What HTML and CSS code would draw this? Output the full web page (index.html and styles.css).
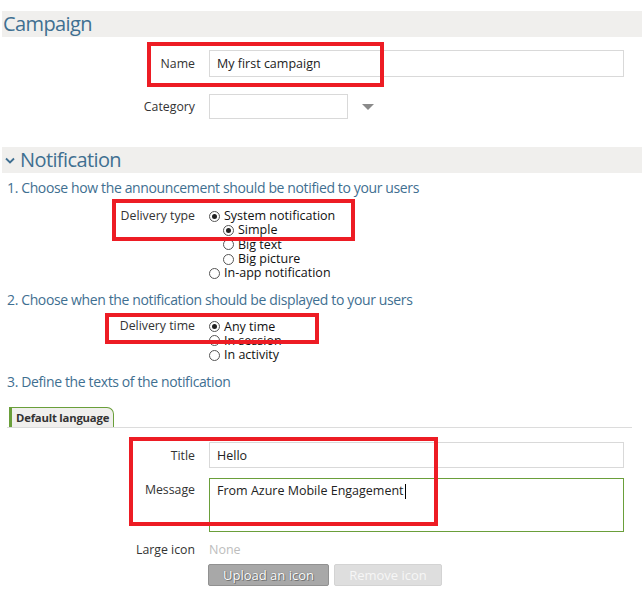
FILE: index.html
```html
<!DOCTYPE html>
<html>
<head>
<meta charset="utf-8">
<link rel="stylesheet" href="styles.css">
</head>
<body>
<div class="page">
  <section class="campaign">
    <h2 class="band">Campaign</h2>
    <div class="row row-name">
      <span class="lbl">Name</span>
      <div class="input wide">My first campaign</div>
    </div>
    <div class="row row-cat">
      <span class="lbl">Category</span>
      <div class="input select"></div>
      <span class="arrow"></span>
    </div>
  </section>

  <section class="notification">
    <h2 class="band band-notif"><span class="chev"><svg width="10" height="8" viewBox="0 0 10 8"><path d="M1 1.5 L5 5.5 L9 1.5" fill="none" stroke="#3f6f91" stroke-width="1.8"/></svg></span>Notification</h2>

    <p class="step step1">1. Choose how the announcement should be notified to your users</p>
    <div class="row row-radio type">
      <span class="lbl">Delivery type</span>
      <div class="radios">
        <div class="opt"><span class="radio on"></span>System notification</div>
        <div class="opt sub"><span class="radio on"></span>Simple</div>
        <div class="opt sub"><span class="radio"></span>Big text</div>
        <div class="opt sub"><span class="radio"></span>Big picture</div>
        <div class="opt"><span class="radio"></span>In-app notification</div>
      </div>
    </div>

    <p class="step step2">2. Choose when the notification should be displayed to your users</p>
    <div class="row row-radio time">
      <span class="lbl">Delivery time</span>
      <div class="radios">
        <div class="opt"><span class="radio on"></span>Any time</div>
        <div class="opt"><span class="radio"></span>In session</div>
        <div class="opt"><span class="radio"></span>In activity</div>
      </div>
    </div>

    <p class="step step3">3. Define the texts of the notification</p>
    <div class="tabs"><span class="tab">Default language</span></div>

    <div class="row row-title">
      <span class="lbl">Title</span>
      <div class="input wide">Hello</div>
    </div>
    <div class="row row-msg">
      <span class="lbl">Message</span>
      <div class="input wide textarea">From Azure Mobile Engagement<span class="caret"></span></div>
    </div>
    <div class="row row-icon">
      <span class="lbl">Large icon</span>
      <span class="none">None</span>
    </div>
    <div class="row row-btns">
      <span class="lbl"></span>
      <div class="btns">
        <span class="btn primary">Upload an icon</span>
        <span class="btn disabled">Remove icon</span>
      </div>
    </div>
  </section>

  <div class="hl hl1"></div>
  <div class="hl hl2"></div>
  <div class="hl hl3"></div>
  <div class="hl hl4"></div>
</div>
</body>
</html>
```
FILE: styles.css
```css
* { box-sizing: border-box; }
html, body { margin: 0; padding: 0; background: #fff; }
body { font-family: "Open Sans", "Noto Sans", sans-serif; color: #333; }
.page { position: relative; width: 642px; height: 607px; overflow: hidden; }

.band {
  margin: 11px 0 0 2px;
  height: 26px;
  background: #f0efed;
  font-weight: normal;
  font-size: 20px;
  line-height: 26px;
  color: #3f6f91;
  padding-left: 1px;
  letter-spacing: -0.6px;
}
.band-notif { margin-top: 28px; display: flex; align-items: center; padding-left: 3px; }
.chev { display: inline-flex; width: 15px; margin-top: 1px; }

.row { display: flex; align-items: center; }
.lbl {
  width: 195px; flex: none; text-align: right; margin-right: 14px;
  font-size: 12.3px; color: #333;
}
.input {
  border: 1px solid #d9d9d9; background: #fff;
  font-size: 12.5px; color: #222; padding-left: 7px;
  display: flex; align-items: center;
}
.wide { width: 415px; }
.row-name { margin-top: 13px; height: 27px; }
.row-name .input { height: 27px; }
.row-cat { margin-top: 17px; height: 25px; }
.select { width: 139px; height: 25px; }
.arrow {
  margin-left: 14px; width: 0; height: 0;
  border-left: 6px solid transparent; border-right: 6px solid transparent;
  border-top: 6px solid #8a8a8a;
}

.step {
  margin: 5px 0 0 7px; height: 20px; line-height: 20px;
  font-size: 14px; color: #3f6f91; letter-spacing: -0.37px;
}
.step2 { margin-top: 10px; }
.step3 { margin-top: 10px; }

.row-radio { align-items: flex-start; }
.row-radio.type { margin-top: 11px; }
.row-radio.time { margin-top: 9px; }
.row-radio .lbl { line-height: 14.3px; }
.radios { display: flex; flex-direction: column; }
.opt {
  display: flex; align-items: center; height: 14.3px; line-height: 14px;
  font-size: 12.5px; color: #111;
}
.opt.sub { padding-left: 14px; }
.radio {
  width: 11px; height: 11px; border-radius: 50%;
  border: 1px solid #555; background: #fff; margin-right: 4px;
  display: inline-flex; align-items: center; justify-content: center; flex: none;
}
.radio.on::after { content: ""; width: 5px; height: 5px; border-radius: 50%; background: #222; }

.tabs {
  margin: 15px 10px 0 7px;
  border-bottom: 1px solid #dcdcdc;
  height: 21px; display: flex; align-items: flex-end;
}
.tab {
  margin-left: 2px;
  height: 20px; width: 105px;
  background: #f0efed;
  border-left: 3px solid #6a9f3a;
  border-top: 1px solid #6a9f3a;
  border-right: 1px solid #6a9f3a;
  border-top-right-radius: 7px;
  font-size: 11.3px; font-weight: bold; color: #333;
  padding-left: 4px; line-height: 19px;
  letter-spacing: -0.2px; white-space: nowrap;
}

.row-title { margin-top: 14px; }
.row-title .input { height: 26px; }
.row-msg { margin-top: 10px; align-items: flex-start; }
.row-msg .lbl { margin-top: 3px; }
.textarea { height: 54px; border-color: #6a9f3a; align-items: flex-start; padding-top: 3px; }
.caret { display: inline-block; width: 1px; height: 15px; background: #000; margin-left: 1px; margin-top: 2px; }
.row-icon { margin-top: 10px; height: 14px; }
.none { font-size: 12.5px; color: #bdbdbd; }
.row-btns { margin-top: 8px; }
.btns { display: flex; gap: 5px; margin-left: -1px; }
.btn {
  height: 22px; border-radius: 2px; font-size: 13px;
  display: inline-flex; align-items: center; justify-content: center;
}
.primary {
  width: 121px; background: #a8a8a8; border: 1px solid #919191;
  color: #fff; text-shadow: 0 0 1px #555, 1px 1px 0 #777;
}
.disabled {
  width: 108px; background: #dedede; border: 1px solid #d3d3d3; color: #f6f6f6;
}

.hl { position: absolute; border: 4px solid #ed1c24; pointer-events: none; }
.hl1 { left: 147px; top: 42px; width: 237px; height: 45px; }
.hl2 { left: 112px; top: 199px; width: 243px; height: 42px; }
.hl3 { left: 105px; top: 313px; width: 214px; height: 31px; }
.hl4 { left: 129px; top: 437px; width: 309px; height: 89px; }
```
